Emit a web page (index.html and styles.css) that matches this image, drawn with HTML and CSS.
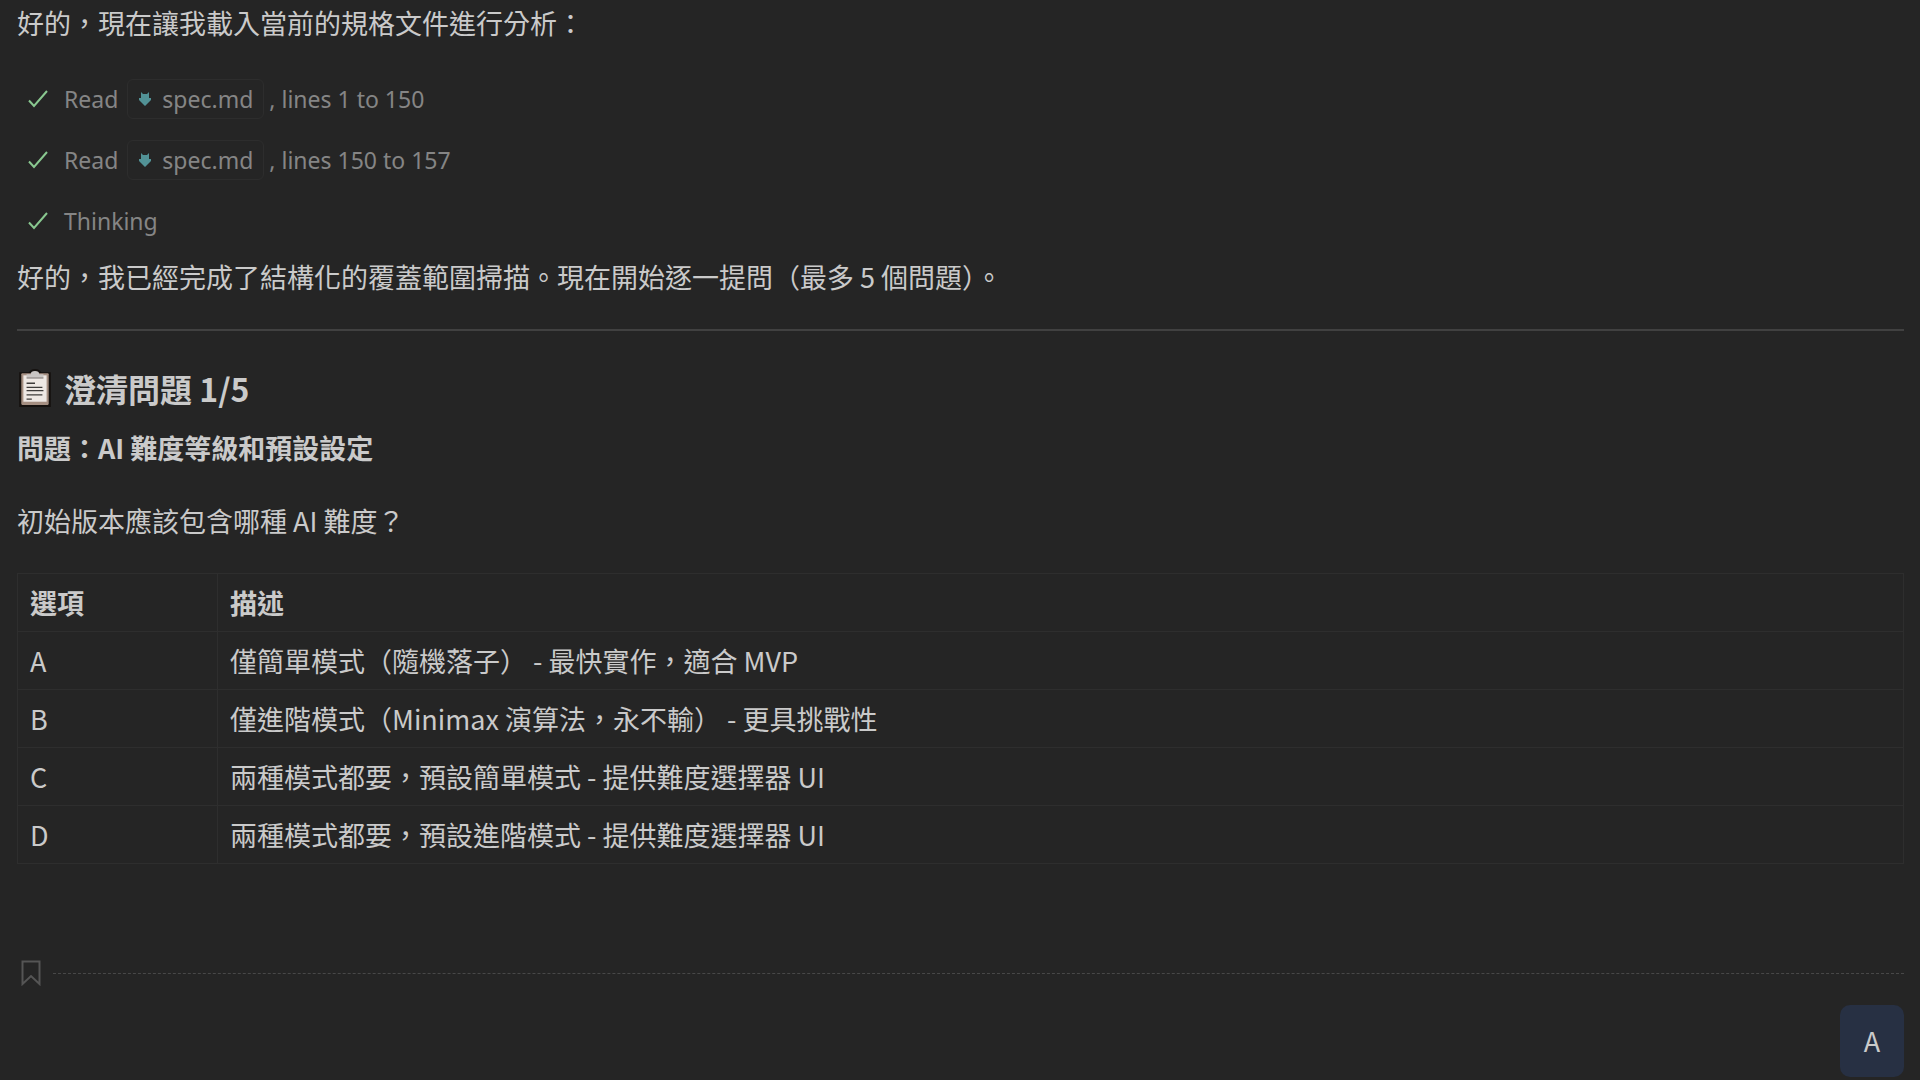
FILE: index.html
```html
<!DOCTYPE html>
<html lang="zh-Hant">
<head>
<meta charset="utf-8">
<title>澄清問題 1/5</title>
<meta name="viewport" content="width=device-width, initial-scale=1">
<link rel="stylesheet" href="styles.css">
</head>
<body>
<svg class="sprite" aria-hidden="true">
  <symbol id="check" viewBox="0 0 22 20"><path d="M2 11.5 7 17 20 2" fill="none" stroke="currentColor" stroke-width="2"/></symbol>
  <symbol id="markdown" viewBox="0 0 12 16"><path d="M2 1 4 3H8L10 1V7H12V9L6 15 0 9V7H2Z" fill="currentColor"/></symbol>
</svg>
<main class="chat">
  <p class="text">好的，現在讓我載入當前的規格文件進行分析：</p>
  <ul class="steps">
    <li class="step"><svg class="check"><use href="#check"/></svg><span>Read</span><a class="file" href="#spec"><svg class="file-icon"><use href="#markdown"/></svg>spec.md</a><span class="lines">, lines 1 to 150</span></li>
    <li class="step"><svg class="check"><use href="#check"/></svg><span>Read</span><a class="file" href="#spec"><svg class="file-icon"><use href="#markdown"/></svg>spec.md</a><span class="lines">, lines 150 to 157</span></li>
    <li class="step"><svg class="check"><use href="#check"/></svg><span>Thinking</span></li>
  </ul>
  <p class="text">好的，我已經完成了結構化的覆蓋範圍掃描。現在開始逐一提問（最多 5 個問題）。</p>
  <hr class="rule">
  <h2 class="title">
    <svg class="clipboard" viewBox="0 0 32 36" aria-hidden="true">
      <path d="M2 4H11Q12 1 16 1T21 4H30V35H2Z" fill="#15110f" stroke="#15110f" stroke-width="2"/>
      <rect x="3" y="4" width="26" height="30" rx="1" fill="#a58f82"/>
      <rect x="5" y="6" width="22" height="25" fill="#eee8e4"/>
      <path d="M8 8V5H12Q12 2 16 2T20 5H24V8Z" fill="#c9c5c3"/>
      <path d="M8 8.500H24" stroke="#77716e"/>
      <path d="M8 13.500H16M8 17.500H23M8 20.500H24M8 24.500H23M8 28.500H13" stroke="#3f3c3b" stroke-width="1.200"/>
    </svg>
    <span>澄清問題 1/5</span>
  </h2>
  <p class="text question"><strong>問題：AI 難度等級和預設設定</strong></p>
  <p class="text prompt">初始版本應該包含哪種 AI 難度？</p>
  <table class="options">
    <thead><tr><th class="key" scope="col">選項</th><th scope="col">描述</th></tr></thead>
    <tbody>
      <tr><td>A</td><td>僅簡單模式（隨機落子） - 最快實作，適合 MVP</td></tr>
      <tr><td>B</td><td>僅進階模式（Minimax 演算法，永不輸） - 更具挑戰性</td></tr>
      <tr><td>C</td><td>兩種模式都要，預設簡單模式 - 提供難度選擇器 UI</td></tr>
      <tr><td>D</td><td>兩種模式都要，預設進階模式 - 提供難度選擇器 UI</td></tr>
    </tbody>
  </table>
  <div class="checkpoint">
    <svg class="bookmark" viewBox="0 0 20 26" aria-hidden="true"><path d="M1.500 1.500H18.500V24L10 16 1.500 24Z" fill="none" stroke="currentColor" stroke-width="2"/></svg>
    <span class="dashes"></span>
  </div>
  <div class="reply"><button class="bubble" type="button">A</button></div>
</main>
</body>
</html>
```
FILE: styles.css
```css
* { box-sizing: border-box; }

body {
  margin: 0;
  background: #252525;
  color: #cacaca;
  font-family: "Noto Sans CJK TC", "Noto Sans", sans-serif;
  font-size: 27px;
  line-height: 36px;
}

.sprite { position: absolute; width: 0; height: 0; }

.chat {
  display: flow-root;
  padding: 0 16px 0 17px;
}

.text { margin: 5px 0 0; }

.steps {
  display: flex;
  flex-direction: column;
  gap: 21px;
  margin: 38px 0 0;
  padding: 0 0 0 10px;
  list-style: none;
  color: #858585;
  font-family: "Noto Sans", sans-serif;
  font-size: 23px;
  line-height: 40px;
}

.step { display: flex; align-items: center; height: 40px; }

.check { width: 22px; height: 20px; margin-right: 15px; color: #89c890; }

.file {
  display: flex;
  align-items: center;
  height: 40px;
  margin: 0 5px 0 9px;
  padding: 0 10px 0 11px;
  border: 1px solid #2d2d2d;
  border-radius: 6px;
  color: inherit;
  text-decoration: none;
}

.file-icon { width: 12px; height: 16px; margin-right: 11px; color: #529296; }

.steps + .text { margin-top: 18px; }

.rule { height: 2px; margin: 34px 0 0; border: 0; background: #414141; }

.title {
  display: flex;
  align-items: center;
  gap: 12px;
  margin: 35px 0 0;
  padding-left: 1px;
  font-size: 32px;
  font-weight: 600;
  line-height: 44px;
}

.clipboard { width: 34px; height: 38px; }

.question { margin-top: 20px; }
.prompt { margin-top: 37px; }

.options {
  width: 100%;
  margin-top: 34px;
  border-collapse: collapse;
}

.options th, .options td {
  height: 58px;
  padding: 0 12px;
  border: 1px solid #2e2e2e;
  text-align: left;
}

.options .key { width: 200px; }

.checkpoint {
  display: flex;
  align-items: center;
  gap: 12px;
  margin-top: 96px;
  padding-left: 4px;
  color: #555;
}

.bookmark { width: 20px; height: 26px; }

.dashes { flex: 1; border-top: 1px dashed #484848; }

.reply { display: flex; justify-content: flex-end; margin-top: 19px; }

.bubble {
  width: 64px;
  height: 72px;
  padding: 0;
  border: 0;
  border-radius: 10px;
  background: #273043;
  color: #cacaca;
  font: inherit;
}
```
